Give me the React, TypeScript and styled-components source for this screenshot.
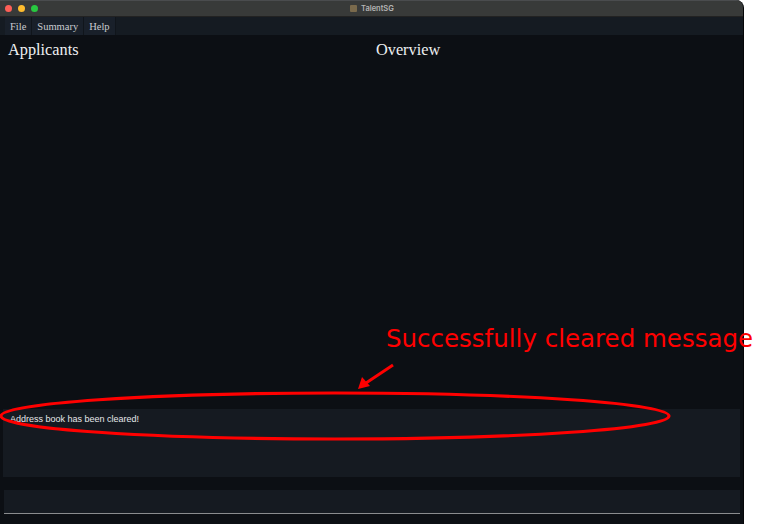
import React from "react";
import styled, { createGlobalStyle } from "styled-components";

const Global = createGlobalStyle`
  html, body { margin: 0; padding: 0; background: #ffffff; }
  #root { width: 757px; height: 524px; position: relative; overflow: hidden; }
`;

const Window = styled.div`
  width: 744px;
  height: 524px;
  display: flex;
  flex-direction: column;
  background: #0c0f14;
  border-right: 1px solid #050608;
  border-top-right-radius: 8px;
  overflow: hidden;
  box-sizing: border-box;
`;

const TitleBar = styled.div`
  height: 17px;
  flex: none;
  background: #383a39;
  border-top: 1px solid #4a4c4e;
  box-sizing: border-box;
  display: flex;
  align-items: center;
  position: relative;
  border-bottom: 1px solid #222;
`;

const Lights = styled.div`
  display: flex;
  gap: 6px;
  padding-left: 5px;
`;

const Light = styled.span<{ $c: string }>`
  width: 7px;
  height: 7px;
  border-radius: 50%;
  background: ${(p) => p.$c};
`;

const Title = styled.div`
  position: absolute;
  left: 350px;
  top: 0;
  height: 15px;
  display: flex;
  align-items: center;
  gap: 4px;
  font-family: "Inter", "Liberation Sans", sans-serif;
  font-size: 7.5px;
  font-weight: 600;
  color: #b5b5b5;
`;

const DocIcon = styled.span`
  width: 7px;
  height: 7px;
  background: #7a6a4c;
  border-radius: 1px;
`;

const MenuBar = styled.div`
  height: 18px;
  flex: none;
  background: #151b22;
  display: flex;
  padding-left: 5px;
`;

const MenuItem = styled.div`
  display: flex;
  align-items: center;
  padding: 0 5px;
  background: #19202a;
  border-right: 1px solid #10151b;
  font-family: "Liberation Serif", "DejaVu Serif", serif;
  font-size: 10.5px;
  color: #c9ccd0;
`;

const Body = styled.div`
  flex: 1;
  display: flex;
  flex-direction: column;
  padding: 0 3px 10px 3px;
`;

const Panels = styled.div`
  flex: 1;
  display: grid;
  grid-template-columns: 368px 1fr;
`;

const PanelTitle = styled.div`
  font-family: "Liberation Serif", "DejaVu Serif", serif;
  font-size: 16.3px;
  color: #eef0f2;
  padding: 5px 0 0 5px;
  line-height: 20px;
`;

const ResultBox = styled.div`
  height: 68px;
  background: #151a21;
  padding: 4px 7px 3px;
  box-sizing: border-box;
  font-family: "Liberation Sans", "Noto Sans", sans-serif;
  font-size: 9px;
  color: #e6e8ea;
  line-height: 13px;
`;

const CommandBox = styled.div`
  height: 24px;
  margin-top: 13px;
  margin-left: 1px;
  background: #151a21;
  border-bottom: 1px solid #8a8c8e;
  box-sizing: border-box;
`;

const Overlay = styled.svg`
  position: absolute;
  left: 0;
  top: 0;
  pointer-events: none;
`;

const Note = styled.div`
  position: absolute;
  left: 386px;
  top: 323px;
  font-family: "DejaVu Sans", "Liberation Sans", sans-serif;
  font-size: 24.5px;
  color: #ff0000;
  white-space: nowrap;
  line-height: 32px;
`;

export default function App() {
  return (
    <>
      <Global />
      <Window>
        <TitleBar>
          <Lights>
            <Light $c="#fe5f57" />
            <Light $c="#febc2e" />
            <Light $c="#28c840" />
          </Lights>
          <Title>
            <DocIcon />
            TalentSG
          </Title>
        </TitleBar>
        <MenuBar>
          <MenuItem>File</MenuItem>
          <MenuItem>Summary</MenuItem>
          <MenuItem>Help</MenuItem>
        </MenuBar>
        <Body>
          <Panels>
            <PanelTitle>Applicants</PanelTitle>
            <PanelTitle>Overview</PanelTitle>
          </Panels>
          <ResultBox>Address book has been cleared!</ResultBox>
          <CommandBox />
        </Body>
      </Window>
      <Note>Successfully cleared message</Note>
      <Overlay width="757" height="524" viewBox="0 0 757 524">
        <ellipse cx="335" cy="416" rx="334" ry="23" fill="none" stroke="#ff0000" strokeWidth="3.2" />
        <line x1="393" y1="365" x2="366" y2="383" stroke="#ff0000" strokeWidth="3" />
        <polygon points="358,389 362,377 370,386" fill="#ff0000" />
      </Overlay>
    </>
  );
}
